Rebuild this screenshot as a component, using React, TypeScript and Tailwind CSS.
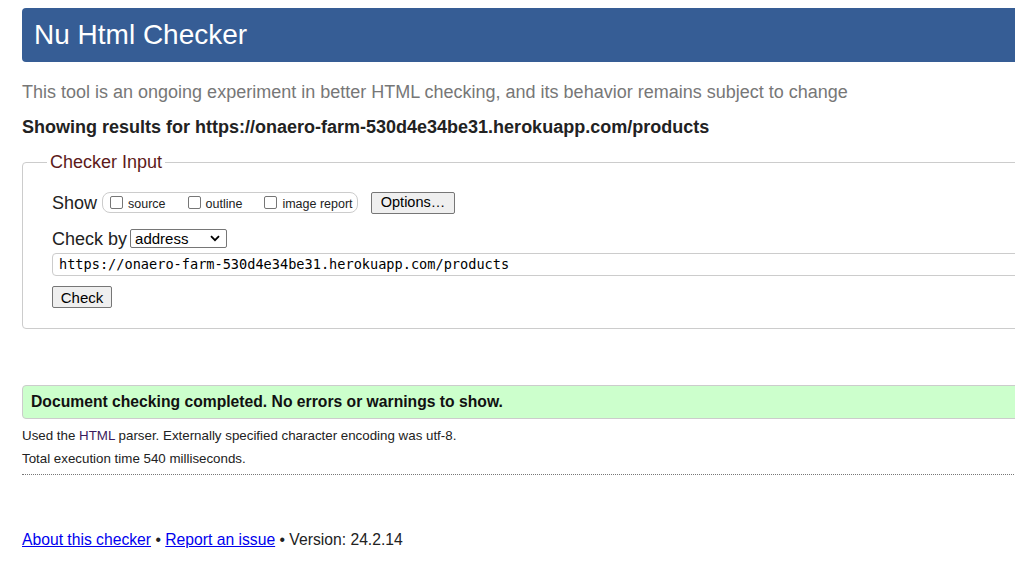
import React from "react";

const URL = "https://onaero-farm-530d4e34be31.herokuapp.com/products";

function Checkbox({ label }: { label: string }) {
  return (
    <label className="flex items-center gap-[5px]">
      <span className="w-[13px] h-[13px] border border-[#767676] rounded-[2px] bg-white" />
      <span className="text-[12.5px] text-[#222] leading-none mt-[3px]">{label}</span>
    </label>
  );
}

export default function App() {
  return (
    <div className="w-full h-[575px] overflow-hidden bg-white font-['Liberation_Sans',Arial,sans-serif] text-[#222]">
      <div className="w-[1120px] pl-[22px] pt-[8px]">
        {/* Title bar */}
        <header className="h-[54px] bg-[#365d95] rounded-[4px] flex items-center pl-[12px]">
          <h1 className="text-white text-[28px] leading-none">Nu Html Checker</h1>
        </header>

        <p className="mt-[19px] text-[18px] leading-[22px] text-[#777]">
          This tool is an ongoing experiment in better HTML checking, and its behavior remains subject to change
        </p>
        <p className="mt-[13px] text-[18px] leading-[22px] font-bold text-[#222]">
          Showing results for {URL}
        </p>

        {/* Checker input */}
        <fieldset className="mt-[13px] border border-[#ccc] rounded-[4px] pl-[29px] pb-[18px]">
          <legend className="-ml-[5px] px-[3px] text-[18px] leading-[22px] text-[#5c1a1a]">Checker Input</legend>

          <div className="flex items-center mt-[18px] h-[23px]">
            <span className="text-[18px] leading-none">Show</span>
            <div className="ml-[5px] h-[21px] w-[256px] border border-[#ccc] rounded-[8px] flex items-center pl-[7px] gap-[22px]">
              <Checkbox label="source" />
              <Checkbox label="outline" />
              <Checkbox label="image report" />
            </div>
            <button className="ml-[13px] h-[22px] w-[84px] bg-[#efefef] border border-[#767676] rounded-[2px] text-[14.5px] leading-none text-black">
              Options…
            </button>
          </div>

          <div className="flex items-center mt-[14px] h-[21px]">
            <span className="text-[18px] leading-none">Check by</span>
            <div className="ml-[3px] h-[19px] w-[97px] border border-[#767676] rounded-[2px] flex items-center justify-between pl-[4px] pr-[6px]">
              <span className="text-[15px] leading-none text-black">address</span>
              <svg width="10" height="7" viewBox="0 0 10 7">
                <path d="M1 1.2 L5 5.2 L9 1.2" fill="none" stroke="#000" strokeWidth="1.8" />
              </svg>
            </div>
          </div>

          <div className="mt-[4px] h-[23px] border border-[#ccc] rounded-[4px] flex items-center pl-[6px]">
            <span className="font-['DejaVu_Sans_Mono','Liberation_Mono',monospace] text-[13.6px] leading-none text-black">{URL}</span>
          </div>

          <button className="mt-[10px] h-[22px] w-[60px] bg-[#efefef] border border-[#767676] rounded-[2px] text-[15px] leading-none text-black">
            Check
          </button>
        </fieldset>

        {/* Result */}
        <div className="mt-[56px] h-[34px] bg-[#ccffcc] border border-[#ccc] rounded-[4px] flex items-center pl-[8px]">
          <span className="text-[15.7px] font-bold leading-none text-[#111]">
            Document checking completed. No errors or warnings to show.
          </span>
        </div>

        <p className="mt-[5px] text-[13.33px] leading-[23px]">
          Used the <abbr className="no-underline text-[#3b1b5c]">HTML</abbr> parser. Externally specified character encoding was utf-8.
        </p>
        <p className="text-[13.33px] leading-[23px]">Total execution time 540 milliseconds.</p>
        <div className="mt-[4px] border-t border-dotted border-[#777]" />

        <p className="mt-[55px] text-[15.7px] leading-[20px]">
          <a href="#" className="text-[#0000ee] underline">About this checker</a> •{" "}
          <a href="#" className="text-[#0000ee] underline">Report an issue</a> • Version: 24.2.14
        </p>
      </div>
    </div>
  );
}
